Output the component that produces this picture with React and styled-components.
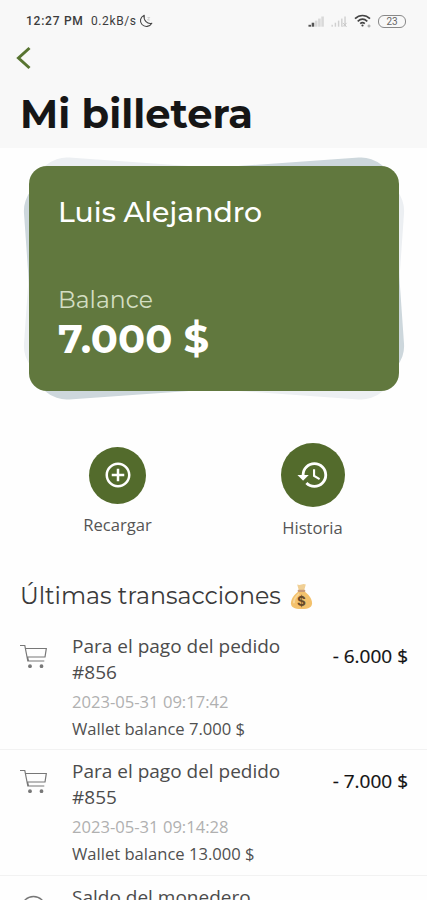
import styled, { createGlobalStyle } from "styled-components";
import { MdAddCircleOutline, MdHistory } from "react-icons/md";

const transactions = [
    {
        id: 1,
        icon: "cart",
        title: "Para el pago del pedido #856",
        date: "2023-05-31 09:17:42",
        balance: "Wallet balance 7.000 $",
        amount: "- 6.000 $",
    },
    {
        id: 2,
        icon: "cart",
        title: "Para el pago del pedido #855",
        date: "2023-05-31 09:14:28",
        balance: "Wallet balance 13.000 $",
        amount: "- 7.000 $",
    },
    {
        id: 3,
        icon: "coin",
        title: "Saldo del monedero",
        date: "",
        balance: "",
        amount: "20.000 $",
    },
];

function MoonIcon() {
    return (
        <svg width="15" height="14" viewBox="0 0 15 14" fill="none" stroke="#444" strokeWidth="1.1">
            <path d="M5.2 1.2C1.2 3 .3 7.600 3 10.500c2.800 3 7.800 2.500 9.800-1.200C8.500 10.300 4.200 6.600 5.200 1.200z" strokeLinejoin="round" />
            <path d="M8.500 3.500h2.200L8.500 6h2.300" strokeWidth=".5" stroke="#aaa" />
        </svg>
    );
}

function SignalIcon({ level, off }) {
    return (
        <svg width="17" height="13" viewBox="0 0 18 13">
            {[0, 1, 2, 3, 4].map((bar) => (
                <rect
                    key={bar}
                    x={bar * 3.400 + 0.500}
                    y={10 - bar * 2.200}
                    width={off ? 1.500 : 2.700}
                    height={2 + bar * 2.200}
                    fill={bar < level ? "#555" : off ? "#d0d0d0" : "#d9d9d9"}
                />
            ))}
            {off && <path d="M12.500 8l4 4m0-4l-4 4" stroke="#c4c4c4" />}
        </svg>
    );
}

function WifiIcon() {
    return (
        <svg width="18" height="14" viewBox="0 0 18 14" fill="none" stroke="#444" strokeWidth="1.700">
            <path d="M1 4.700C5.500.4 11.500.4 16 4.700M3.700 7.300c3-2.700 6.600-2.700 9.600 0M6.200 9.700c1.500-1.300 3.100-1.300 4.600 0" />
            <circle cx="8.500" cy="11.500" r="1.100" fill="#444" stroke="none" />
            <path d="M13.500 12h3M15 10.500v3" stroke="#999" strokeWidth="1" />
        </svg>
    );
}

function MoneyBagIcon() {
    return (
        <svg width="23" height="27" viewBox="0 0 24 28">
            <path d="M7.500 1.500q2.200 1 4.500 0t4.500 0L14.800 7.500H9.200z" fill="#f0cf94" />
            <path d="M9 8.500C5 11.500 1 16 1 21c0 4 3 6 11 6s11-2 11-6c0-5-4-9.500-8-12.500z" fill="#f3c16c" />
            <path d="M4 21c0-4 2.500-7.500 5.500-10" fill="none" stroke="#f8d698" strokeWidth="2" />
            <rect x="8" y="7" width="8" height="2.200" rx="1" fill="#c99a76" />
            <text x="12" y="23.500" textAnchor="middle" fontFamily="Inter, sans-serif" fontSize="14" fontWeight="700" fill="#674a28">$</text>
        </svg>
    );
}

function CartIcon() {
    return (
        <svg width="28" height="26" viewBox="0 0 28 26" fill="none" stroke="#777" strokeWidth="1.200">
            <path d="M0 1.500h4.800l3 15.500h16.500M5.500 4.500h20.800L25 13H7.200M8 17h16.200M7.500 13l1 4" />
            <circle cx="10" cy="22.200" r="1.300" fill="#777" />
            <circle cx="21.500" cy="22.200" r="1.300" fill="#777" />
        </svg>
    );
}

function CoinIcon() {
    return (
        <svg width="28" height="26" viewBox="0 0 28 26" fill="none" stroke="#777" strokeWidth="1.300">
            <circle cx="13.500" cy="13.500" r="12" />
            <path d="M13.500 7v13" />
        </svg>
    );
}

function App() {
    return (
        <>
            <GlobalStyle />
            <StScreen>
                <StHeader>
                    <StStatusBar>
                        <StStatusText>12:27 PM</StStatusText>
                        <StSpeed>0.2kB/s</StSpeed>
                        <MoonIcon />
                        <StStatusIcons>
                            <SignalIcon level={2} />
                            <SignalIcon level={0} off />
                            <WifiIcon />
                            <StBattery>23</StBattery>
                        </StStatusIcons>
                    </StStatusBar>
                    <StBackButton aria-label="Volver">
                        <svg width="15" height="24" viewBox="0 0 15 24" fill="none" stroke="#587431" strokeWidth="3">
                            <path d="M13.500 2L2.500 12L13.500 22" />
                        </svg>
                    </StBackButton>
                    <StTitle>Mi billetera</StTitle>
                </StHeader>
                <StCardArea>
                    <StCardLayer $color="#eceff2" $angle={4} />
                    <StCardLayer $color="#cdd7dc" $angle={-4} />
                    <StCard>
                        <StOwner>Luis Alejandro</StOwner>
                        <StBalanceLabel>Balance</StBalanceLabel>
                        <StBalance>7.000 $</StBalance>
                    </StCard>
                </StCardArea>
                <StActions>
                    <StAction>
                        <StCircle $size={57}>
                            <MdAddCircleOutline size={30} />
                        </StCircle>
                        <StActionLabel>Recargar</StActionLabel>
                    </StAction>
                    <StAction>
                        <StCircle $size={64}>
                            <MdHistory size={34} />
                        </StCircle>
                        <StActionLabel>Historia</StActionLabel>
                    </StAction>
                </StActions>
                <StSectionTitle>
                    <span>Últimas transacciones</span>
                    <MoneyBagIcon />
                </StSectionTitle>
                {transactions.map((item) => (
                    <StRow key={item.id}>
                        <StRowIcon>{item.icon === "cart" ? <CartIcon /> : <CoinIcon />}</StRowIcon>
                        <StDetails>
                            <StRowTitle>{item.title}</StRowTitle>
                            <StDate>{item.date}</StDate>
                            <StRowBalance>{item.balance}</StRowBalance>
                        </StDetails>
                        <StAmount>{item.amount}</StAmount>
                    </StRow>
                ))}
            </StScreen>
        </>
    );
}

export default App;

const GlobalStyle = createGlobalStyle`
    * {
        box-sizing: border-box;
    }
    body {
        margin: 0;
        background: #fefefe;
        font-family: "Open Sans", sans-serif;
    }
    svg {
        display: block;
        flex-shrink: 0;
    }
`;
const StScreen = styled.main`
    width: 427px;
    height: 900px;
    overflow: hidden;
    background: #fefefe;
`;
const StHeader = styled.header`
    height: 148px;
    background: #f8f8f8;
`;
const StStatusBar = styled.div`
    display: flex;
    align-items: center;
    height: 42px;
    padding: 0 21px 0 26px;
    font-family: Roboto, sans-serif;
    font-size: 12px;
    color: #3c3c3c;
`;
const StStatusText = styled.span`
    font-weight: 500;
    letter-spacing: 0.75px;
    width: 65px;
    white-space: nowrap;
`;
const StSpeed = styled.span`
    width: 48px;
    letter-spacing: 0.6px;
`;
const StStatusIcons = styled.div`
    display: flex;
    align-items: center;
    gap: 6px;
    margin-left: auto;
`;
const StBattery = styled.span`
    width: 28px;
    height: 13px;
    border: 1.5px solid #888;
    border-radius: 6px;
    font-size: 10px;
    line-height: 11px;
    text-align: center;
    color: #666;
`;
const StBackButton = styled.button`
    display: block;
    margin: 4px 0 0 16px;
    padding: 0;
    border: 0;
    background: none;
`;
const StTitle = styled.h1`
    margin: 19px 0 0 20px;
    font-family: Montserrat, Inter, sans-serif;
    font-size: 40px;
    font-weight: 700;
    line-height: 50px;
    color: #161616;
`;
const StCardArea = styled.section`
    display: grid;
    align-items: center;
    margin: 18px 28px 0 29px;
    height: 225px;

    & > * {
        grid-area: 1 / 1;
    }
`;
const StCardLayer = styled.div`
    height: 221px;
    border-radius: 32px;
    background: ${(props) => props.$color};
    transform: rotate(${(props) => props.$angle}deg);
`;
const StCard = styled.div`
    display: flex;
    flex-direction: column;
    height: 225px;
    padding: 28px 29px;
    border-radius: 18px;
    background: #61783e;
    color: #fff;
    font-family: Montserrat, Inter, sans-serif;
    z-index: 1;
`;
const StOwner = styled.div`
    font-size: 28.3px;
    font-weight: 500;
    line-height: 36px;
    white-space: nowrap;
`;
const StBalanceLabel = styled.div`
    margin-top: 55px;
    font-size: 23.5px;
    line-height: 30px;
    color: #d3dec2;
`;
const StBalance = styled.div`
    font-size: 40px;
    font-weight: 700;
    line-height: 48px;
    white-space: nowrap;
`;
const StActions = styled.div`
    display: grid;
    grid-template-columns: 195px 195px;
    align-items: center;
    margin: 49px 0 0 20px;
    height: 103px;
`;
const StAction = styled.div`
    display: flex;
    flex-direction: column;
    align-items: center;
    gap: 9px;
`;
const StCircle = styled.button`
    display: flex;
    align-items: center;
    justify-content: center;
    width: ${(props) => props.$size}px;
    height: ${(props) => props.$size}px;
    padding: 0;
    border: 0;
    border-radius: 50%;
    background: #536b2c;
    color: #fff;
`;
const StActionLabel = styled.span`
    font-size: 16.6px;
    line-height: 24px;
    color: #555;
`;
const StSectionTitle = styled.h2`
    display: flex;
    align-items: center;
    gap: 9px;
    margin: 37px 0 0 20px;
    height: 32px;
    font-family: Montserrat, Inter, sans-serif;
    font-size: 23.7px;
    font-weight: 400;
    line-height: 32px;
    white-space: nowrap;
    color: #3a3a3a;
`;
const StRow = styled.article`
    display: flex;
    align-items: flex-start;
    height: 125.5px;
    padding: 8px 19px 0 20px;
    border-bottom: 1px solid #f2f2f2;

    h2 + & {
        margin-top: 12.5px;
    }
`;
const StRowIcon = styled.div`
    width: 52px;
    padding-top: 11px;
`;
const StDetails = styled.div`
    width: 225px;
`;
const StRowTitle = styled.div`
    font-size: 19px;
    line-height: 26px;
    color: #4c4c4c;
`;
const StDate = styled.div`
    margin-top: 3px;
    font-size: 16.6px;
    line-height: 27px;
    color: #b0b0b0;
`;
const StRowBalance = styled.div`
    font-size: 16.6px;
    line-height: 27px;
    color: #505050;
`;
const StAmount = styled.div`
    margin: 10px 0 0 auto;
    font-size: 19px;
    font-weight: 500;
    line-height: 27px;
    white-space: nowrap;
    color: #111;
    -webkit-text-stroke: 0.2px #111;
`;
